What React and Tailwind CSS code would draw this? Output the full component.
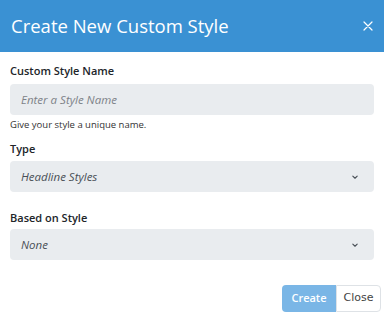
import React from "react";

const ChevronDown = () => (
  <svg width="10" height="10" viewBox="0 0 16 16" fill="none" stroke="#495057" strokeWidth="1.8" strokeLinecap="round" strokeLinejoin="round">
    <path d="M4.5 6.5l3.5 3.5 3.5-3.5" />
  </svg>
);

const App = () => {
  return (
    <div className="w-[384px] h-[321px] bg-white text-[#212529]" style={{ fontFamily: '"Open Sans", sans-serif' }}>
      {/* Header */}
      <div className="h-[52px] bg-[#3a91d3] flex items-center justify-between pl-[11px] pr-[11px]">
        <h2 className="text-[18.5px] text-white leading-none">Create New Custom Style</h2>
        <svg width="10" height="10" viewBox="0 0 10 10" stroke="white" strokeWidth="1.2" strokeLinecap="round">
          <path d="M1 1l8 8M9 1L1 9" />
        </svg>
      </div>

      {/* Body */}
      <div className="px-[10px] pt-[11px]">
        <label className="block text-[11px] font-semibold leading-[16px]">Custom Style Name</label>
        <div className="mt-[5px] h-[31px] rounded-[4px] bg-[#e9ecef] flex items-center px-[11px]">
          <span className="text-[11.5px] italic text-[#7d8288]">Enter a Style Name</span>
        </div>
        <p className="text-[9.5px] mt-[4px] leading-[12px] text-[#333]">Give your style a unique name.</p>

        <label className="block text-[11px] font-semibold leading-[16px] mt-[10px]">Type</label>
        <div className="mt-[4px] h-[31px] rounded-[4px] bg-[#e9ecef] flex items-center justify-between pl-[11px] pr-[14px]">
          <span className="text-[11.5px] italic text-[#495057]">Headline Styles</span>
          <ChevronDown />
        </div>

        <label className="block text-[11px] font-semibold leading-[16px] mt-[18px]">Based on Style</label>
        <div className="mt-[3px] h-[31px] rounded-[4px] bg-[#e9ecef] flex items-center justify-between pl-[11px] pr-[14px]">
          <span className="text-[11.5px] italic text-[#495057]">None</span>
          <ChevronDown />
        </div>

        <div className="flex justify-end mt-[25px] -mr-[7px]">
          <button className="h-[27px] w-[54px] rounded-l-[4px] bg-[#7ab6e6] text-white text-[11px] font-semibold">Create</button>
          <button className="h-[27px] w-[45px] rounded-r-[4px] border border-[#dee2e6] bg-white text-[#444] text-[11px]" style={{ fontFamily: '"DejaVu Sans", sans-serif' }}>Close</button>
        </div>
      </div>
    </div>
  );
};

export default App;
